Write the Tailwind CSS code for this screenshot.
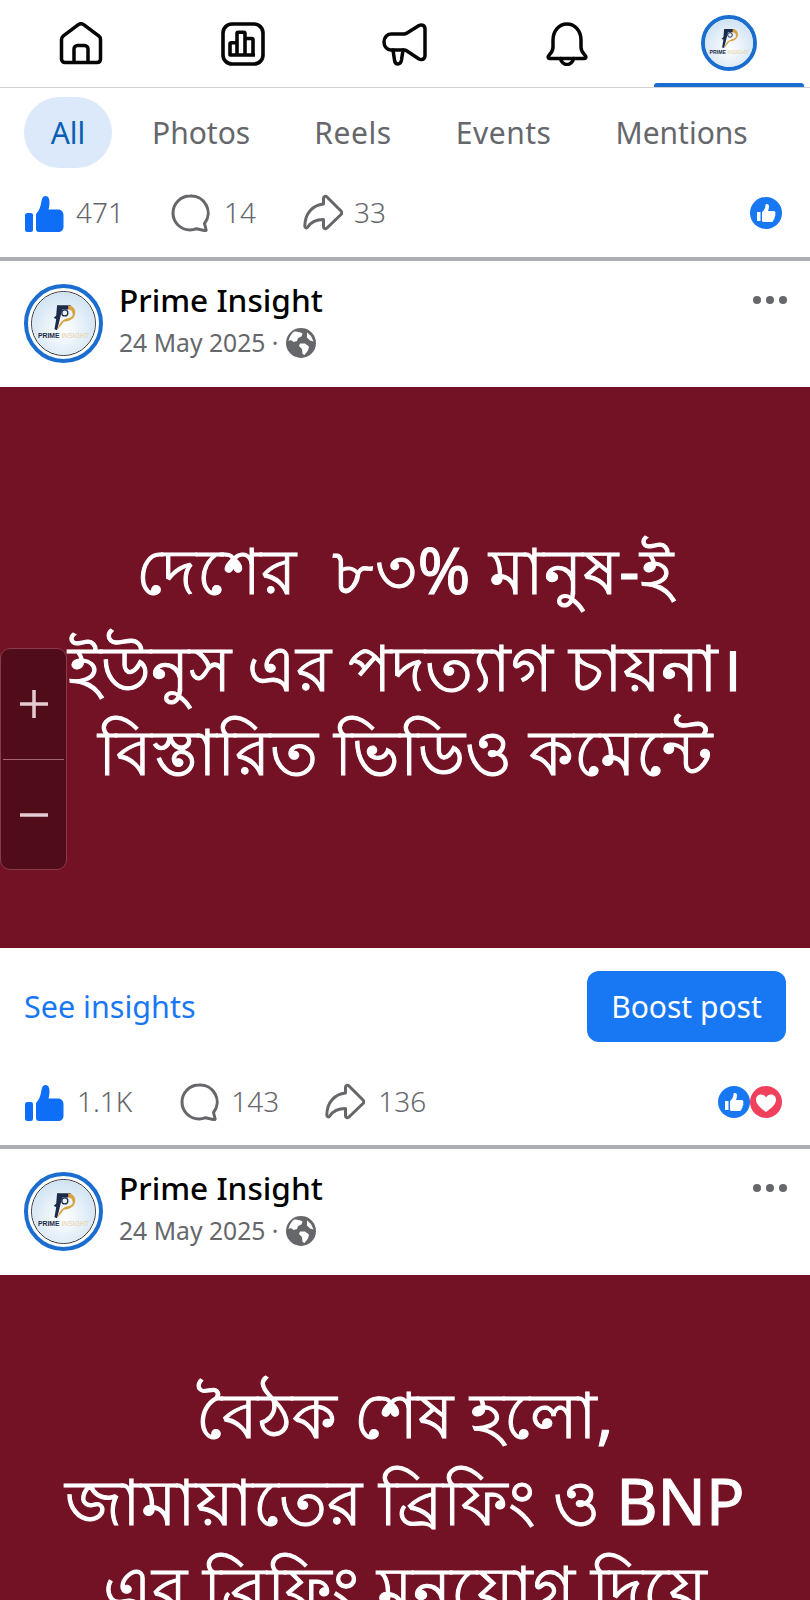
<!DOCTYPE html>
<html><head><meta charset="utf-8"><script src="https://cdn.jsdelivr.net/npm/@tailwindcss/browser@4"></script></head>
<body class="bg-white font-['Noto_Sans',Roboto,sans-serif] overflow-hidden h-[1600px]">
<svg width="0" height="0" class="absolute">
<defs>
<radialGradient id="lg" cx="50%" cy="60%" r="60%"><stop offset="0" stop-color="#ffffff"/><stop offset="1" stop-color="#cfe2f3"/></radialGradient>
<symbol id="like" viewBox="0 0 40 38"><path fill="#0e6ef5" d="M1 21.500a2.500 2.500 0 0 1 2.500-2.500H7a2 2 0 0 1 2 2v15a2 2 0 0 1-2 2H3.500A2.500 2.500 0 0 1 1 35.500zM12 20C15 17 16.500 13 17.500 7 18 3.500 19.500 2 21.500 2 24.500 2 25.500 5 25.500 8 25.500 11 25 13.500 24.500 15.500H34C37.500 15.500 39.500 18 39.500 21V33c0 3-2.500 5-5 5H15c-2 0-3-1-3-3z"/></symbol>
<symbol id="cmt" viewBox="0 0 40 38"><path fill="none" stroke="#65676b" stroke-width="3" stroke-linecap="round" stroke-linejoin="round" d="M20 2a17 17 0 1 0 0 34c2.500 0 4.500-.5 6.500-1.300l8.500 2c.8.2 1.300-.4 1-1.200l-1.500-6A17 17 0 0 0 20 2z"/></symbol>
<symbol id="shr" viewBox="0 0 40 38"><path fill="none" stroke="#65676b" stroke-width="3" stroke-linecap="round" stroke-linejoin="round" d="M24 3c-1.300-1.300-3.500-.5-3.500 1.300V10C10 11 2 19 1.800 32c0 2 2 2.500 3 1C8 28 13 25.500 20.500 25.500v7.200c0 1.800 2.200 2.600 3.500 1.300L38 20.500c1-1 1-2.500 0-3.500z"/></symbol>
<symbol id="globe" viewBox="0 0 30 30"><circle cx="15" cy="15" r="15" fill="#65676b"/><path fill="#fff" d="M8 3.500c3 0 6 .5 8.500 2l-1 3-3.500 1.500-1 3-3.500 1L5 12l-2.500 1C3.500 9 5 6 8 3.500zM14 15.500l5 0 4 3-1 4-3.500 4.500-2-1-.5-5-3-3zM21 4.500l4 3.500 2.500 5.500-3.500-1-3-3z"/></symbol>
<symbol id="rlike" viewBox="0 0 32 32"><circle cx="16" cy="16" r="16" fill="#1877f2"/><path fill="#fff" d="M7 15h3.500v9H7zM12 15c2-1.500 3.500-4 3.500-7 0-1.500 3.500-1.500 3.500 1.500 0 1.500-.4 3-1 4.500h5.500c2 0 2.500 2 1.500 3 .7 1 .5 2.500-.5 3 .3 1 0 2.300-1 2.800 0 1.500-1 2.200-2 2.200H14c-1 0-2-.5-2-1.500z"/></symbol>
<symbol id="logo" viewBox="0 0 60 60"><circle cx="30" cy="30" r="30" fill="url(#lg)"/><g transform="translate(5 6) scale(.82)"><path fill="#1c2b4a" d="M23 8h16l-3 5h-7l-6 24-3-1 2-12-3-1 3-3z"/><path fill="#d9a13b" d="M36 8c6 1 9 5 8 10-1 6-7 9-13 9l-7 9c1-7 6-12 13-13 3-1 5-3 4-6-.5-3-3-4-5-4z"/><circle cx="32" cy="17" r="3.500" fill="none" stroke="#1c2b4a" stroke-width="1.500"/></g><text x="30" y="44" text-anchor="middle" font-family="Liberation Sans" font-size="6.500" font-weight="700" fill="#1c2b4a">PRIME <tspan font-weight="400" fill="#e8cf9a">INSIGHT</tspan></text></symbol>
</defs>
</svg>

<nav class="h-[88px] border-b-[1.5px] border-[#d0d1d3] grid grid-cols-5 items-center">
  <div class="flex justify-center"><svg class="w-[44px] h-[44px]" viewBox="0 0 44 44" fill="none" stroke="#050505" stroke-width="3.500" stroke-linejoin="round"><path d="M2.500 17.500c0-1.500.6-2.500 1.500-3.300L19 2.800c1.800-1.300 4.200-1.300 6 0l15 11.400c1 .8 1.500 1.800 1.500 3.300V37c0 2.200-1.500 3.500-3.500 3.500H6C4 40.500 2.500 39 2.500 37z"/><path d="M15 40.500V27c0-2 1.500-3.500 3.500-3.500h7c2 0 3.500 1.500 3.500 3.500v13.500"/></svg></div>
  <div class="flex justify-center"><svg class="w-[44px] h-[44px]" viewBox="0 0 44 44" fill="none" stroke="#050505" stroke-width="3.600" stroke-linejoin="round"><rect x="2" y="2" width="40" height="40" rx="9"/><path d="M9 33V22c0-.8.500-1.300 1.300-1.300h5.700V33zM16 33V11.500c0-.8.500-1.300 1.300-1.300h5.400c.8 0 1.300.5 1.300 1.300V33zM24 33V16.500h6.700c.8 0 1.300.5 1.300 1.300V33zM8 33h26"/></svg></div>
  <div class="flex justify-center"><svg class="w-[46px] h-[44px]" viewBox="0 0 46 44" fill="none" stroke="#050505" stroke-width="3.500" stroke-linejoin="round" stroke-linecap="round"><path d="M9 12H22c1 0 2-.3 3-1L37 3.500c3-1.500 6 0 6 3.500V33.500c0 3.500-3 5-6 3.500L25 29c-1-.7-2-1-3-1H9C5 28 2 24.500 2 20S5 12 9 12z"/><path d="M11 28l1.500 10c.3 2.500 2 4 3.500 4s3-1.500 3.500-4L21 28"/></svg></div>
  <div class="flex justify-center"><svg class="w-[42px] h-[44px]" viewBox="0 0 42 44" fill="none" stroke="#050505" stroke-width="3.500" stroke-linejoin="round" stroke-linecap="round"><path d="M7 18C7 9 13 2 21 2s14 7 14 16v7c0 3 1 5 3 7l1.500 2c.7 1 .3 2.500-1.500 2.500H4c-1.800 0-2.200-1.500-1.500-2.500l1.500-2c2-2 3-4 3-7z"/><path d="M14.500 36.500c.5 3.500 3.500 6 6.500 6s6-2.500 6.500-6"/></svg></div>
  <div class="relative h-full flex items-center justify-center"><div class="w-[56px] h-[56px] rounded-full border-[4px] border-[#1b6ed0] overflow-hidden -mt-[1px]"><svg class="w-full h-full"><use href="#logo"/></svg></div><div class="absolute bottom-0 left-[6px] right-[6px] h-[4px] rounded-t-[3px] bg-[#1b6ed0]"></div></div>
</nav>

<div class="flex items-center h-[71px] mt-[9px] pl-[24px] text-[#65676b] text-[30px] leading-none">
  <div class="w-[88px] h-[71px] rounded-full bg-[#dbe9fa] text-[#0a5fb4] flex items-center justify-center">All</div>
  <div class="ml-[40px]">Photos</div>
  <div class="ml-[64px] tracking-[0.6px]">Reels</div>
  <div class="ml-[64px] tracking-[0.5px]">Events</div>
  <div class="ml-[64px]">Mentions</div>
</div>

<div class="flex items-center h-[40px] mt-[25px] pl-[24px] pr-[28px] text-[#65676b] text-[28px] font-light">
  <svg class="w-[40px] h-[38px]"><use href="#like"/></svg><span class="ml-[12px] -mt-[2px]">471</span>
  <svg class="ml-[46px] w-[40px] h-[38px]"><use href="#cmt"/></svg><span class="ml-[14px] -mt-[2px]">14</span>
  <svg class="ml-[47px] w-[40px] h-[38px]"><use href="#shr"/></svg><span class="ml-[11px] -mt-[2px]">33</span>
  <svg class="ml-auto w-[32px] h-[32px]"><use href="#rlike"/></svg>
</div>
<div class="h-[4px] bg-[#aeafb4] mt-[24px]"></div>

<article class="flex items-center h-[126px] pl-[24px] pr-[20px] relative pb-[2px]">
  <div class="w-[79px] h-[79px] rounded-full border-[4px] border-[#1b6ed0] p-[3px]"><div class="w-full h-full rounded-full border-[1.5px] border-[#333] overflow-hidden"><svg class="w-full h-full"><use href="#logo"/></svg></div></div>
  <div class="ml-[16px] -mt-[6px]">
    <div class="text-[31.6px] leading-[40px] font-medium text-black">Prime Insight</div>
    <div class="flex items-center text-[24.7px] leading-[36px] mt-[5px] text-[#65676b]">24 May 2025 ·<svg class="ml-[8px] w-[30px] h-[30px]"><use href="#globe"/></svg></div>
  </div>
  <div class="absolute right-[23px] top-[35px] flex gap-[5px]"><i class="w-[8px] h-[8px] rounded-full bg-[#65676b]"></i><i class="w-[8px] h-[8px] rounded-full bg-[#65676b]"></i><i class="w-[8px] h-[8px] rounded-full bg-[#65676b]"></i></div>
</article>

<section class="relative h-[561px] bg-[#721224] text-white text-center text-[63.7px] leading-[87px] [-webkit-text-stroke:1px_white] pt-[139px]">
  <p class="whitespace-pre mb-[10px] tracking-[0.8px]">দেশের  ৮৩% মানুষ-ই</p>
  <p>ইউনুস এর পদত্যাগ চায়না।</p>
  <p class="-mt-[3px]">বিস্তারিত ভিডিও কমেন্টে</p>
  <div class="absolute left-0 top-[261px] w-[67px] h-[222px] rounded-[10px] border border-[#8b3a4a] bg-[#510c1a] flex flex-col [-webkit-text-stroke:0]">
    <div class="flex-1 flex items-center justify-center"><svg class="w-[28px] h-[28px]" viewBox="0 0 28 28" stroke="#e4ccd2" stroke-width="3.500"><path d="M0 14h28M14 0v28"/></svg></div>
    <div class="h-[1px] mx-[2px] bg-[#a56673]"></div>
    <div class="flex-1 flex items-center justify-center"><svg class="w-[28px] h-[28px]" viewBox="0 0 28 28" stroke="#e4ccd2" stroke-width="3.500"><path d="M0 15h28"/></svg></div>
  </div>
</section>

<div class="flex items-center justify-between h-[117px] pl-[24px] pr-[24px]">
  <span class="text-[#1877f2] text-[30.5px]">See insights</span>
  <span class="w-[199px] h-[71px] rounded-[12px] bg-[#1877f2] text-white text-[30px] flex items-center justify-center">Boost post</span>
</div>

<div class="flex items-center h-[40px] mt-[17px] pl-[24px] pr-[28px] text-[#65676b] text-[28px] font-light">
  <svg class="w-[40px] h-[38px]"><use href="#like"/></svg><span class="ml-[13px] -mt-[2px]">1.1K</span>
  <svg class="ml-[47px] w-[40px] h-[38px]"><use href="#cmt"/></svg><span class="ml-[12px] -mt-[2px]">143</span>
  <svg class="ml-[46px] w-[40px] h-[38px]"><use href="#shr"/></svg><span class="ml-[13px] -mt-[2px]">136</span>
  <span class="ml-auto flex"><svg class="w-[32px] h-[32px]"><use href="#rlike"/></svg><svg class="w-[32px] h-[32px]" viewBox="0 0 32 32"><circle cx="16" cy="16" r="16" fill="#f0415c"/><path fill="#fff" d="M16 26C9 21 6 17.500 6 13.500 6 10.500 8.300 8.500 11 8.500c2 0 4 1 5 3 1-2 3-3 5-3 2.700 0 5 2 5 5 0 4-3 7.500-10 12.500z"/></svg></span>
</div>
<div class="h-[4px] bg-[#aeafb4] mt-[23px]"></div>

<article class="flex items-center h-[126px] pl-[24px] pr-[20px] relative pb-[2px]">
  <div class="w-[79px] h-[79px] rounded-full border-[4px] border-[#1b6ed0] p-[3px]"><div class="w-full h-full rounded-full border-[1.5px] border-[#333] overflow-hidden"><svg class="w-full h-full"><use href="#logo"/></svg></div></div>
  <div class="ml-[16px] -mt-[6px]">
    <div class="text-[31.6px] leading-[40px] font-medium text-black">Prime Insight</div>
    <div class="flex items-center text-[24.7px] leading-[36px] mt-[5px] text-[#65676b]">24 May 2025 ·<svg class="ml-[8px] w-[30px] h-[30px]"><use href="#globe"/></svg></div>
  </div>
  <div class="absolute right-[23px] top-[35px] flex gap-[5px]"><i class="w-[8px] h-[8px] rounded-full bg-[#65676b]"></i><i class="w-[8px] h-[8px] rounded-full bg-[#65676b]"></i><i class="w-[8px] h-[8px] rounded-full bg-[#65676b]"></i></div>
</article>

<section class="h-[330px] bg-[#721224] text-white text-center text-[63.7px] leading-[87px] [-webkit-text-stroke:1px_white] pt-[95px]">
  <p>বৈঠক শেষ হলো,</p>
  <p>জামায়াতের ব্রিফিং ও BNP</p>
  <p>এর ব্রিফিং মনযোগ দিয়ে</p>
</section>
</body></html>
